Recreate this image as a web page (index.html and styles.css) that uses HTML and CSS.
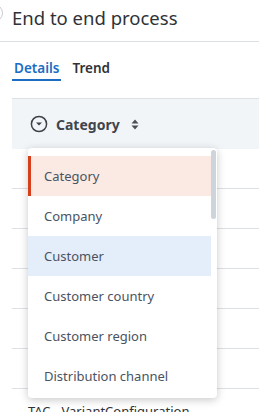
FILE: index.html
```html
<!DOCTYPE html>
<html>
<head>
<meta charset="utf-8">
<link rel="stylesheet" href="styles.css">
</head>
<body>
<div class="page">
  <div class="titlebar">
    <span class="back"></span>
    <h1 class="title">End to end process</h1>
  </div>
  <div class="tabs">
    <span class="tab active">Details</span>
    <span class="tab">Trend</span>
  </div>
  <div class="table">
    <div class="thead">
      <svg class="hicon" width="18" height="18" viewBox="0 0 18 18"><circle cx="9" cy="9" r="7.6" fill="none" stroke="#3d4148" stroke-width="1.5"/><path d="M6 7.6 L9 10.6 L12 7.6 Z" fill="#3d4148"/></svg>
      <span class="hlabel">Category</span>
      <svg class="sort" width="8" height="11" viewBox="0 0 8 11"><path d="M4 0.5 L7.5 4.5 H0.5 Z M4 10.5 L7.5 6.5 H0.5 Z" fill="#4a4f57"/></svg>
    </div>
    <div class="row"></div>
    <div class="row"></div>
    <div class="row"></div>
    <div class="row"></div>
    <div class="row"></div>
    <div class="row"></div>
    <div class="row"><span class="cell">TAC - VariantConfiguration</span></div>
  </div>
  <div class="menu">
    <div class="item selected">Category</div>
    <div class="item">Company</div>
    <div class="item hover">Customer</div>
    <div class="item">Customer country</div>
    <div class="item">Customer region</div>
    <div class="item">Distribution channel</div>
    <div class="scrollbar"></div>
  </div>
</div>
</body>
</html>
```
FILE: styles.css
```css
html, body {
  margin: 0;
  padding: 0;
  background: #fff;
  overflow: hidden;
}
body {
  font-family: "Noto Sans", "Open Sans", sans-serif;
  color: #333;
}
.page {
  position: relative;
  width: 259px;
  height: 412px;
  overflow: hidden;
}
.titlebar {
  position: relative;
  height: 41px;
  border-bottom: 1px solid #dcdfe4;
  display: flex;
  align-items: center;
  padding-left: 12px;
}
.back {
  position: absolute;
  left: -15px;
  top: 4px;
  width: 16px;
  height: 16px;
  border: 1.5px solid #c9ccd1;
  border-radius: 50%;
}
.title {
  margin: 0;
  font-size: 18.5px;
  font-weight: 400;
  color: #2f3237;
  line-height: 24px;
  margin-top: -6px;
}
.tabs {
  display: flex;
  gap: 9px;
  padding-left: 12px;
  margin-top: 17px;
  height: 39px;
  align-items: flex-start;
}
.tab {
  font-size: 13.5px;
  font-weight: 600;
  color: #2f3237;
  line-height: 19px;
  padding: 0 2px 1px;
}
.tab.active {
  color: #1b6ec2;
  border-bottom: 2px solid #1b6ec2;
}
.table {
  margin-left: 12px;
}
.thead {
  height: 50px;
  border-top: 1px solid #dde1e6;
  background: #f2f5f8;
  display: flex;
  align-items: center;
  padding-left: 18px;
  gap: 8px;
}
.hlabel {
  font-size: 14px;
  font-weight: 700;
  color: #40454d;
}
.sort { margin-left: 3px; }
.row {
  height: 39px;
  border-bottom: 1px solid #dde1e6;
  display: flex;
  align-items: center;
  padding-left: 16px;
}
.cell {
  font-size: 13px;
  color: #2f3237;
  margin-top: 4px;
}
.menu {
  position: absolute;
  left: 28px;
  top: 148px;
  width: 189px;
  padding: 8px 0 2px;
  background: #fff;
  border-radius: 4px;
  box-shadow: 0 2px 8px rgba(0,0,0,0.22);
}
.item {
  height: 40px;
  display: flex;
  align-items: center;
  padding-left: 16px;
  font-size: 13px;
  color: #4a5361;
}
.item.selected {
  background: #fbe9e3;
  border-left: 3px solid #d63f1c;
  padding-left: 13px;
  margin-right: 6px;
}
.item.hover {
  background: #e4eefa;
  margin-right: 6px;
}
.scrollbar {
  position: absolute;
  right: 1px;
  top: 2px;
  width: 5px;
  height: 69px;
  border-radius: 3px;
  background: #cdd4db;
}
```
